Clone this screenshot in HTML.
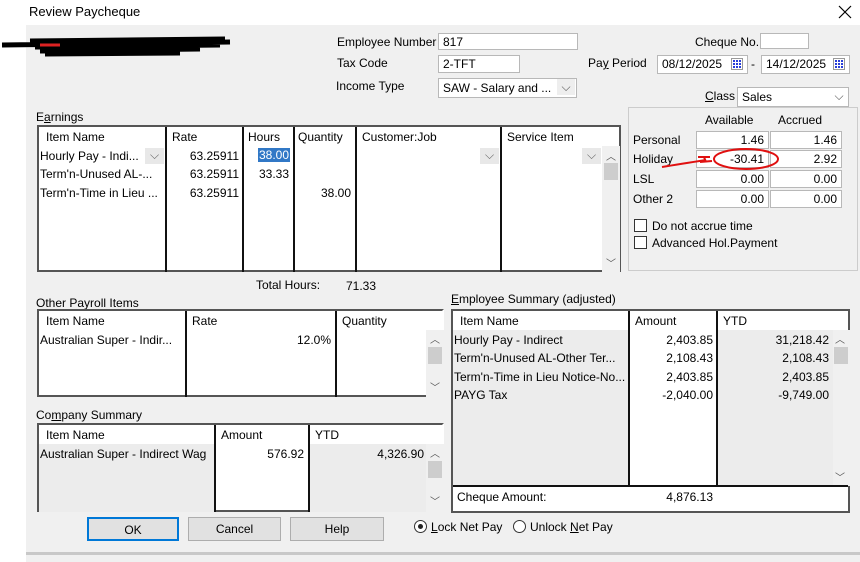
<!DOCTYPE html>
<html><head><meta charset="utf-8"><style>
*{box-sizing:border-box;margin:0;padding:0}
body{width:860px;height:562px;background:#fff;font-family:"Liberation Sans",sans-serif;font-size:12px;color:#000;position:relative;overflow:hidden}
.a{position:absolute;white-space:nowrap}
.panel{position:absolute;left:26px;top:25px;width:834px;height:537px;background:#f0f0f0}
.inp{position:absolute;background:#fff;border:1px solid #b8b8b8;padding:1px 4px;line-height:14px}
.r{text-align:right}
.tbl{position:absolute;background:#fff;border:2px solid #555;border-right-color:#fff}
.hdr{position:absolute;top:0;height:19px;line-height:19px;background:#fff}
.vl{position:absolute;width:1.5px;background:#111}
.g{position:absolute;background:#ececec}
.sb{position:absolute;background:#f0f0f0}
.th{position:absolute;width:14px;height:17px;background:#cdcdcd}
.chev{position:absolute;font-size:10px;color:#555}
.btn{position:absolute;top:517px;height:24px;background:#e1e1e1;border:1px solid #adadad;text-align:center;line-height:22px}
.cal{position:absolute;width:12px;height:12px;background:#2a3fd9;border:1px solid #999;background-image:linear-gradient(#fff 1px,transparent 1px),linear-gradient(90deg,#fff 1px,transparent 1px);background-size:3px 3px}
.cb{position:absolute;width:13px;height:13px;border:1px solid #333;background:#fff}
</style></head><body>
<div class="a" style="left:29px;top:4px;font-size:13px">Review Paycheque</div>
<svg class="a" style="left:838px;top:5px" width="14" height="14"><path d="M1 1 L13 13 M13 1 L1 13" stroke="#000" stroke-width="1.2"/></svg>
<div class="panel"></div>
<svg class="a" style="left:0;top:33px" width="235" height="28"><path d="M2 12 L230 9 M30 8 L225 6 M35 14 L220 12 M40 18 L200 16 M45 21 L180 20" stroke="#000" stroke-width="5" fill="none"/><path d="M40 12 L60 12" stroke="#d22" stroke-width="3"/></svg>

<div class="a" style="left:337px;top:35px">Employee Number</div>
<div class="inp" style="left:438px;top:33px;width:140px;height:17px">817</div>
<div class="a" style="left:337px;top:56px">Tax Code</div>
<div class="inp" style="left:438px;top:55px;width:82px;height:18px">2-TFT</div>
<div class="a" style="left:336px;top:79px">Income Type</div>
<div class="inp" style="left:438px;top:78px;width:139px;height:20px;line-height:16px">SAW - Salary and ...<span class="a" style="left:118px;top:0;width:18px;height:16px;background:#eee;text-align:center;color:#555">⌵</span></div>
<div class="a" style="left:695px;top:35px">Cheque No.</div>
<div class="inp" style="left:760px;top:33px;width:49px;height:16px"></div>
<div class="a" style="left:588px;top:56px">Pa<u>y</u> Period</div>
<div class="inp" style="left:657px;top:55px;width:91px;height:19px">08/12/2025<span class="cal" style="left:73px;top:2px"></span></div>
<div class="a" style="left:751px;top:57px">-</div>
<div class="inp" style="left:761px;top:55px;width:89px;height:19px">14/12/2025<span class="cal" style="left:71px;top:2px"></span></div>
<div class="a" style="left:705px;top:89px"><u>C</u>lass</div>
<div class="inp" style="left:737px;top:87px;width:112px;height:20px;line-height:16px">Sales<span class="a" style="left:93px;top:0;width:16px;height:16px;text-align:center;color:#555">⌵</span></div>

<div class="a" style="left:628px;top:107px;width:230px;height:164px;border:1px solid #ccc"></div>
<div class="a" style="left:705px;top:113px">Available</div>
<div class="a" style="left:778px;top:113px">Accrued</div>
<div class="a" style="left:633px;top:133px">Personal</div>
<div class="a" style="left:633px;top:152px">Holiday</div>
<div class="a" style="left:633px;top:172px">LSL</div>
<div class="a" style="left:633px;top:192px">Other 2</div>
<div class="inp r" style="left:696px;top:131px;width:73px;height:18px">1.46</div>
<div class="inp r" style="left:770px;top:131px;width:72px;height:18px">1.46</div>
<div class="inp r" style="left:696px;top:150px;width:73px;height:18px">-30.41</div>
<div class="inp r" style="left:770px;top:150px;width:72px;height:18px">2.92</div>
<div class="inp r" style="left:696px;top:170px;width:73px;height:18px">0.00</div>
<div class="inp r" style="left:770px;top:170px;width:72px;height:18px">0.00</div>
<div class="inp r" style="left:696px;top:190px;width:73px;height:18px">0.00</div>
<div class="inp r" style="left:770px;top:190px;width:72px;height:18px">0.00</div>
<svg class="a" style="left:660px;top:148px" width="125" height="24"><ellipse cx="86" cy="11" rx="32" ry="10" stroke="#e01010" stroke-width="2" fill="none"/><path d="M2 19 Q20 16 46 12 M38 9 L50 9 M40 14 L52 13 M44 9 L46 14" stroke="#e01010" stroke-width="2" fill="none"/></svg>
<div class="cb" style="left:634px;top:219px"></div><div class="a" style="left:652px;top:219px">Do not accrue time</div>
<div class="cb" style="left:634px;top:236px"></div><div class="a" style="left:652px;top:236px">Advanced Hol.Payment</div>

<!-- Earnings -->
<div class="a" style="left:36px;top:110px">E<u>a</u>rnings</div>
<div class="tbl" style="left:37px;top:125px;width:584px;height:147px;border-right-color:#555">
 <div class="hdr" style="left:0;width:580px"></div>
 <div class="a" style="left:7px;top:3px">Item Name</div><div class="a" style="left:133px;top:3px">Rate</div><div class="a" style="left:209px;top:3px">Hours</div><div class="a" style="left:259px;top:3px">Quantity</div><div class="a" style="left:323px;top:3px">Customer:Job</div><div class="a" style="left:468px;top:3px">Service Item</div>
 <div class="vl" style="left:126px;top:0;height:145px"></div><div class="vl" style="left:203px;top:0;height:145px"></div><div class="vl" style="left:254px;top:0;height:145px"></div><div class="vl" style="left:316px;top:0;height:145px"></div><div class="vl" style="left:461px;top:0;height:145px"></div>
 <div class="sb" style="left:563px;top:19px;width:18px;height:126px"></div><div class="th" style="left:565px;top:36px"></div>
 <div class="chev" style="left:567px;top:21px">︿</div><div class="chev" style="left:567px;top:128px">﹀</div>
 <div class="a" style="left:1px;top:22px">Hourly Pay - Indi...</div><div class="a" style="left:106px;top:21px;width:19px;height:16px;background:#e8e8e8;text-align:center;color:#666">⌵</div>
 <div class="a" style="left:441px;top:21px;width:19px;height:16px;background:#e8e8e8;text-align:center;color:#666">⌵</div>
 <div class="a" style="left:543px;top:21px;width:19px;height:16px;background:#e8e8e8;text-align:center;color:#666">⌵</div>
 <div class="a r" style="left:130px;top:22px;width:70px">63.25911</div><div class="a" style="left:219px;top:21px;background:#3178c6;color:#fff;padding:0 1px">38.00</div>
 <div class="a" style="left:1px;top:40px">Term'n-Unused AL-...</div><div class="a r" style="left:130px;top:40px;width:70px">63.25911</div><div class="a r" style="left:205px;top:40px;width:45px">33.33</div>
 <div class="a" style="left:1px;top:59px">Term'n-Time in Lieu ...</div><div class="a r" style="left:130px;top:59px;width:70px">63.25911</div><div class="a r" style="left:260px;top:59px;width:52px">38.00</div>
</div>
<div class="a" style="left:256px;top:278px">Total Hours:</div><div class="a" style="left:346px;top:279px">71.33</div>

<!-- Other payroll -->
<div class="a" style="left:36px;top:296px">Other Payroll Items</div>
<div class="tbl" style="left:37px;top:309px;width:407px;height:88px">
 <div class="hdr" style="left:0;width:405px"></div>
 <div class="a" style="left:7px;top:3px">Item Name</div><div class="a" style="left:153px;top:3px">Rate</div><div class="a" style="left:303px;top:3px">Quantity</div>
 <div class="vl" style="left:146px;top:0;height:86px"></div><div class="vl" style="left:296px;top:0;height:86px"></div>
 <div class="sb" style="left:387px;top:19px;width:20px;height:69px"></div><div class="th" style="left:389px;top:36px"></div>
 <div class="chev" style="left:391px;top:20px">︿</div><div class="chev" style="left:391px;top:68px">﹀</div>
 <div class="a" style="left:1px;top:22px">Australian Super - Indir...</div><div class="a r" style="left:150px;top:22px;width:142px">12.0%</div>
</div>

<!-- Company summary -->
<div class="a" style="left:36px;top:408px">Co<u>m</u>pany Summary</div>
<div class="tbl" style="left:37px;top:423px;width:407px;height:89px">
 <div class="g" style="left:0;top:19px;width:175px;height:68px"></div><div class="g" style="left:271px;top:19px;width:116px;height:68px"></div>
 <div class="hdr" style="left:0;width:405px"></div>
 <div class="a" style="left:7px;top:3px">Item Name</div><div class="a" style="left:182px;top:3px">Amount</div><div class="a" style="left:276px;top:3px">YTD</div>
 <div class="vl" style="left:175px;top:0;height:87px"></div><div class="vl" style="left:269px;top:0;height:87px"></div>
 <div class="sb" style="left:387px;top:19px;width:20px;height:70px"></div><div class="th" style="left:389px;top:36px"></div>
 <div class="chev" style="left:391px;top:20px">︿</div><div class="chev" style="left:391px;top:68px">﹀</div>
 <div class="a" style="left:1px;top:22px">Australian Super - Indirect Wag</div><div class="a r" style="left:180px;top:22px;width:85px">576.92</div><div class="a r" style="left:272px;top:22px;width:113px">4,326.90</div>
</div>

<!-- Employee summary -->
<div class="a" style="left:451px;top:292px"><u>E</u>mployee Summary (adjusted)</div>
<div class="tbl" style="left:451px;top:309px;width:399px;height:204px;border-right-color:#555">
 <div class="g" style="left:0;top:19px;width:175px;height:156px"></div><div class="g" style="left:265px;top:19px;width:115px;height:156px"></div>
 <div class="hdr" style="left:0;width:380px"></div>
 <div class="a" style="left:7px;top:3px">Item Name</div><div class="a" style="left:182px;top:3px">Amount</div><div class="a" style="left:270px;top:3px">YTD</div>
 <div class="vl" style="left:175px;top:0;height:175px"></div><div class="vl" style="left:263px;top:0;height:175px"></div>
 <div class="sb" style="left:380px;top:19px;width:17px;height:156px"></div><div class="th" style="left:381px;top:36px"></div>
 <div class="chev" style="left:382px;top:20px">︿</div><div class="chev" style="left:382px;top:158px">﹀</div>
 <div class="a" style="left:0;top:174px;width:395px;height:2px;background:#111"></div>
 <div class="a" style="left:1px;top:22px">Hourly Pay - Indirect</div><div class="a r" style="left:180px;top:22px;width:80px">2,403.85</div><div class="a r" style="left:268px;top:22px;width:108px">31,218.42</div>
 <div class="a" style="left:1px;top:40px">Term'n-Unused AL-Other Ter...</div><div class="a r" style="left:180px;top:40px;width:80px">2,108.43</div><div class="a r" style="left:268px;top:40px;width:108px">2,108.43</div>
 <div class="a" style="left:1px;top:59px">Term'n-Time in Lieu Notice-No...</div><div class="a r" style="left:180px;top:59px;width:80px">2,403.85</div><div class="a r" style="left:268px;top:59px;width:108px">2,403.85</div>
 <div class="a" style="left:1px;top:77px">PAYG Tax</div><div class="a r" style="left:180px;top:77px;width:80px">-2,040.00</div><div class="a r" style="left:268px;top:77px;width:108px">-9,749.00</div>
 <div class="a" style="left:4px;top:179px">Cheque Amount:</div><div class="a r" style="left:180px;top:179px;width:80px">4,876.13</div>
</div>

<div class="btn" style="left:87px;width:92px;border:2px solid #0078d7">OK</div>
<div class="btn" style="left:188px;width:93px">Cancel</div>
<div class="btn" style="left:290px;width:94px">Help</div>
<div class="a" style="left:414px;top:520px;width:13px;height:13px;border:1px solid #333;border-radius:50%;background:#fff"><div class="a" style="left:3px;top:3px;width:5px;height:5px;border-radius:50%;background:#222"></div></div>
<div class="a" style="left:431px;top:520px"><u>L</u>ock Net Pay</div>
<div class="a" style="left:513px;top:520px;width:13px;height:13px;border:1px solid #333;border-radius:50%;background:#fff"></div>
<div class="a" style="left:530px;top:520px">Unlock <u>N</u>et Pay</div>
<div class="a" style="left:26px;top:552px;width:834px;height:3px;background:#c8c8c8"></div>
</body></html>
